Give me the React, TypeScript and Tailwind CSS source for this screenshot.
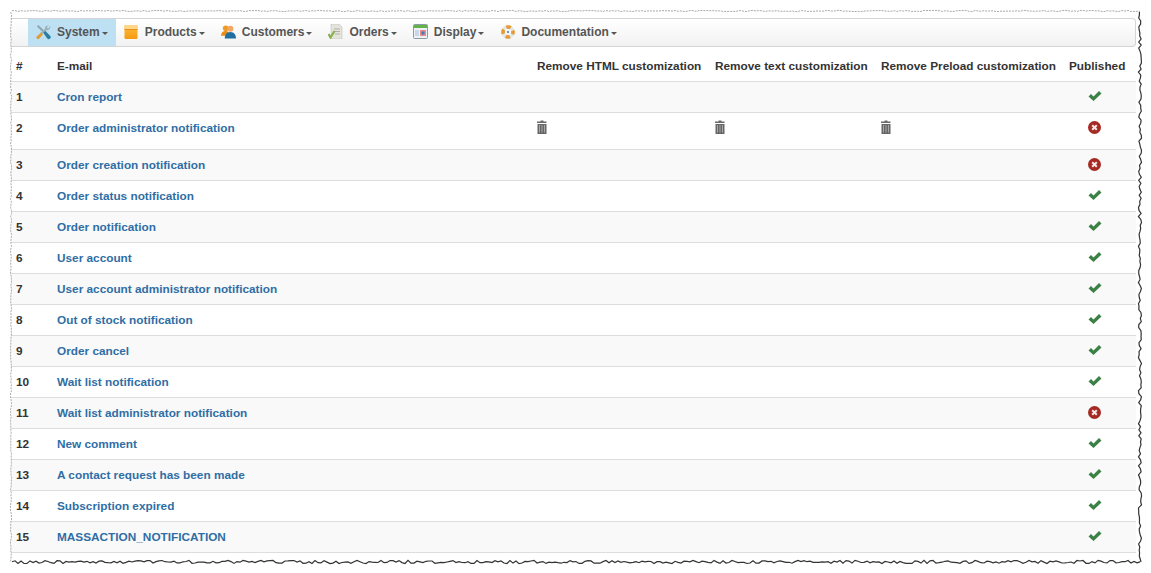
import type { ReactNode } from 'react'

const emails = [
  { name: 'Cron report', published: true },
  { name: 'Order administrator notification', published: false, custom: true },
  { name: 'Order creation notification', published: false },
  { name: 'Order status notification', published: true },
  { name: 'Order notification', published: true },
  { name: 'User account', published: true },
  { name: 'User account administrator notification', published: true },
  { name: 'Out of stock notification', published: true },
  { name: 'Order cancel', published: true },
  { name: 'Wait list notification', published: true },
  { name: 'Wait list administrator notification', published: false },
  { name: 'New comment', published: true },
  { name: 'A contact request has been made', published: true },
  { name: 'Subscription expired', published: true },
  { name: 'MASSACTION_NOTIFICATION', published: true },
]

function SystemIcon() {
  return (
    <svg width="16" height="16" viewBox="0 0 16 16">
      <path d="M1 2l1.500-1.500 6 6-1.500 1.500z" fill="#8fa5ad" />
      <path d="M7.500 8.500l2-2 5.500 5.500a2 2 0 0 1-3 3z" fill="#2a7d9e" />
      <path d="M15 1.500a3.500 3.500 0 0 1-4.500 4.500L6 10.500 4.500 9 9.500 4.500a3.500 3.500 0 0 1 4-3.500l-2 2 1.500 1.500z" fill="#9bb0b8" />
      <path d="M5.500 8.500l2 2-4 4.500a1.500 1.500 0 0 1-2.500-2.500z" fill="#e39a35" />
    </svg>
  )
}

function ProductsIcon() {
  return (
    <svg width="14" height="15" viewBox="0 0 14 15">
      <defs>
        <linearGradient id="box" x1="0" y1="0" x2="0" y2="1">
          <stop offset="0" stopColor="#fdbd3a" />
          <stop offset="1" stopColor="#f59a12" />
        </linearGradient>
      </defs>
      <rect x="0.500" y="1" width="13" height="14" rx="1" fill="url(#box)" />
      <rect x="0.500" y="1" width="13" height="4" rx="1" fill="#fdd68a" />
      <rect x="0.500" y="5" width="13" height="1" fill="#e8901a" />
    </svg>
  )
}

function CustomersIcon() {
  return (
    <svg width="16" height="15" viewBox="0 0 16 15">
      <circle cx="5" cy="4" r="3" fill="#ee9a24" />
      <path d="M0 12c0-3 2-5 5-5s4 2 4 5z" fill="#e88c18" />
      <circle cx="10" cy="4.500" r="3.200" fill="#f2a860" />
      <path d="M4 15c0-4 2-7 6-7s6 3 6 7z" fill="#1f6f9f" />
    </svg>
  )
}

function OrdersIcon() {
  return (
    <svg width="15" height="15" viewBox="0 0 15 15">
      <path d="M3 0h8l3 3v12H3z" fill="#e4e4dc" stroke="#b8b8b0" strokeWidth="0.500" />
      <path d="M6 5h6M6 7.500h6M7 10h5" stroke="#b0b0a8" strokeWidth="1" />
      <path d="M0.500 10l2 3.500L6.500 7" fill="none" stroke="#8ab04a" strokeWidth="2.200" />
    </svg>
  )
}

function DisplayIcon() {
  return (
    <svg width="15" height="15" viewBox="0 0 15 15">
      <rect x="0.500" y="0.500" width="14" height="14" rx="1" fill="#eef2f6" stroke="#8a9aa8" />
      <rect x="1" y="1" width="13" height="3" fill="#63b34a" />
      <rect x="7" y="6" width="6" height="6" fill="#e98a8a" />
      <rect x="8.500" y="7.500" width="3" height="3" fill="#3d7fb8" />
      <rect x="2" y="6" width="4" height="6" fill="#c8d8e8" />
    </svg>
  )
}

function DocumentationIcon() {
  return (
    <svg width="14" height="14" viewBox="0 0 14 14">
      <circle cx="7" cy="7" r="5" fill="none" stroke="#dfe6ea" strokeWidth="3.600" />
      <circle cx="7" cy="7" r="5" fill="none" stroke="#e89a30" strokeWidth="3.600" strokeDasharray="4.500 3.350" strokeDashoffset="2.250" />
      <circle cx="7" cy="7" r="1.200" fill="#6a9cc0" />
    </svg>
  )
}

function TrashIcon() {
  return (
    <svg width="10" height="14" viewBox="0 0 10 14" className="block">
      <path d="M3.500 0.500h3v1h3v1.500h-9.500v-1.500h3.500z" fill="#6a6a6a" />
      <path d="M0.500 4h9v10h-9z" fill="#666666" />
      <path d="M2.500 5v7.500M5 5v7.500M7.500 5v7.500" stroke="#a8a8a8" strokeWidth="1" />
    </svg>
  )
}

function CheckIcon() {
  return (
    <svg width="14" height="12" viewBox="0 0 14 12" className="block">
      <path d="M0.500 6.500L3 4l2.500 2.500L11 1l2.500 2.500-8 7.500z" fill="#3b8044" />
    </svg>
  )
}

function CrossIcon() {
  return (
    <svg width="13" height="13" viewBox="0 0 13 13" className="block">
      <circle cx="6.500" cy="6.500" r="6.500" fill="#a52a24" />
      <path d="M4.200 4.200l4.600 4.600M8.800 4.200l-4.600 4.600" stroke="#f4e8e8" strokeWidth="2" />
    </svg>
  )
}

function Caret() {
  return <span className="ml-[2px] mt-[3px] h-0 w-0 border-x-[3px] border-t-[3px] border-x-transparent border-t-[#555555]" />
}

function MenuItem({ label, icon, active }: { label: string; icon: ReactNode; active?: boolean }) {
  return (
    <div className={`flex h-[27px] items-center px-2 pb-[2px] ${active ? 'bg-[#bde0f3]' : ''}`}>
      <span className="flex w-[15px] shrink-0 justify-center">{icon}</span>
      <span className="ml-[6px] text-[12px] font-bold text-[#555555]">{label}</span>
      <Caret />
    </div>
  )
}

// jagged outline for the torn paper edge of the screenshot
function jagged(from: [number, number], to: [number, number], amount: number, seedStart: number) {
  let seed = seedStart
  const jitter = () => {
    seed = (seed * 16807) % 2147483647
    return ((seed % 300) / 150 - 1) * amount
  }
  const steps = Math.round(Math.hypot(to[0] - from[0], to[1] - from[1]) / 3)
  const pts: string[] = []
  for (let i = 0; i <= steps; i++) {
    const x = from[0] + ((to[0] - from[0]) * i) / steps
    const y = from[1] + ((to[1] - from[1]) * i) / steps
    pts.push(from[1] === to[1] ? `${x.toFixed(1)},${(y + jitter()).toFixed(1)}` : `${(x + jitter()).toFixed(1)},${y.toFixed(1)}`)
  }
  return pts.join(' ')
}

export default function App() {
  return (
    <div className="relative h-[573px] w-[1151px] overflow-hidden bg-white pl-[11px] pt-[18px] font-['Liberation_Sans',Arial,sans-serif]">
      <div className="w-[1125px]">
        <nav className="flex h-[29px] items-start rounded-r-[4px] border border-l-0 border-[#d4d4d4] bg-gradient-to-b from-white to-[#f2f2f2] pl-[17px]">
          <MenuItem label="System" icon={<SystemIcon />} active />
          <MenuItem label="Products" icon={<ProductsIcon />} />
          <MenuItem label="Customers" icon={<CustomersIcon />} />
          <MenuItem label="Orders" icon={<OrdersIcon />} />
          <MenuItem label="Display" icon={<DisplayIcon />} />
          <MenuItem label="Documentation" icon={<DocumentationIcon />} />
        </nav>

        <table className="w-full table-fixed border-collapse text-[11.8px] font-bold text-[#333333]">
          <colgroup>
            <col className="w-[41px]" />
            <col className="w-[480px]" />
            <col className="w-[178px]" />
            <col className="w-[166px]" />
            <col className="w-[188px]" />
            <col />
          </colgroup>
          <thead>
            <tr className="h-[34px] border-b border-[#dddddd] text-left">
              <th className="px-[5px] pt-[7px] font-bold">#</th>
              <th className="px-[5px] pt-[7px] font-bold">E-mail</th>
              <th className="px-[5px] pt-[7px] font-bold whitespace-nowrap">Remove HTML customization</th>
              <th className="px-[5px] pt-[7px] font-bold whitespace-nowrap">Remove text customization</th>
              <th className="px-[5px] pt-[7px] font-bold whitespace-nowrap">Remove Preload customization</th>
              <th className="px-[5px] pt-[7px] font-bold">Published</th>
            </tr>
          </thead>
          <tbody>
            {emails.map((mail, i) => (
              <tr
                key={mail.name}
                className={`border-b border-[#dddddd] align-top ${mail.custom ? 'h-[37px]' : 'h-[31px]'} ${i % 2 === 0 ? 'bg-[#f9f9f9]' : 'bg-white'}`}
              >
                <td className="px-[5px] pt-[7px]">{i + 1}</td>
                <td className="px-[5px] pt-[7px]">
                  <a href="#" className="text-[#2f6ea5]">{mail.name}</a>
                </td>
                <td className="px-[5px] pt-[7px]">{mail.custom && <TrashIcon />}</td>
                <td className="px-[5px] pt-[7px]">{mail.custom && <TrashIcon />}</td>
                <td className="px-[5px] pt-[7px]">{mail.custom && <TrashIcon />}</td>
                <td className="pl-[24px] pt-[8px]">
                  {mail.published ? <CheckIcon /> : <CrossIcon />}
                </td>
              </tr>
            ))}
          </tbody>
        </table>
      </div>

      <svg width="1151" height="573" className="pointer-events-none absolute left-0 top-0">
        <polyline points={jagged([12, 11], [1140, 11], 0.6, 7)} fill="none" stroke="#aaaaaa" strokeWidth="1" strokeDasharray="2 1" />
        <polyline points={jagged([11, 12], [11, 562], 0.6, 11)} fill="none" stroke="#aaaaaa" strokeWidth="1" strokeDasharray="2 1" />
        <polyline points={jagged([1140, 12], [1140, 562], 1.6, 13)} fill="none" stroke="#333333" strokeWidth="1.200" />
        <polyline points={jagged([12, 562], [1140, 562], 1.6, 17)} fill="none" stroke="#333333" strokeWidth="1.200" />
      </svg>
    </div>
  )
}
